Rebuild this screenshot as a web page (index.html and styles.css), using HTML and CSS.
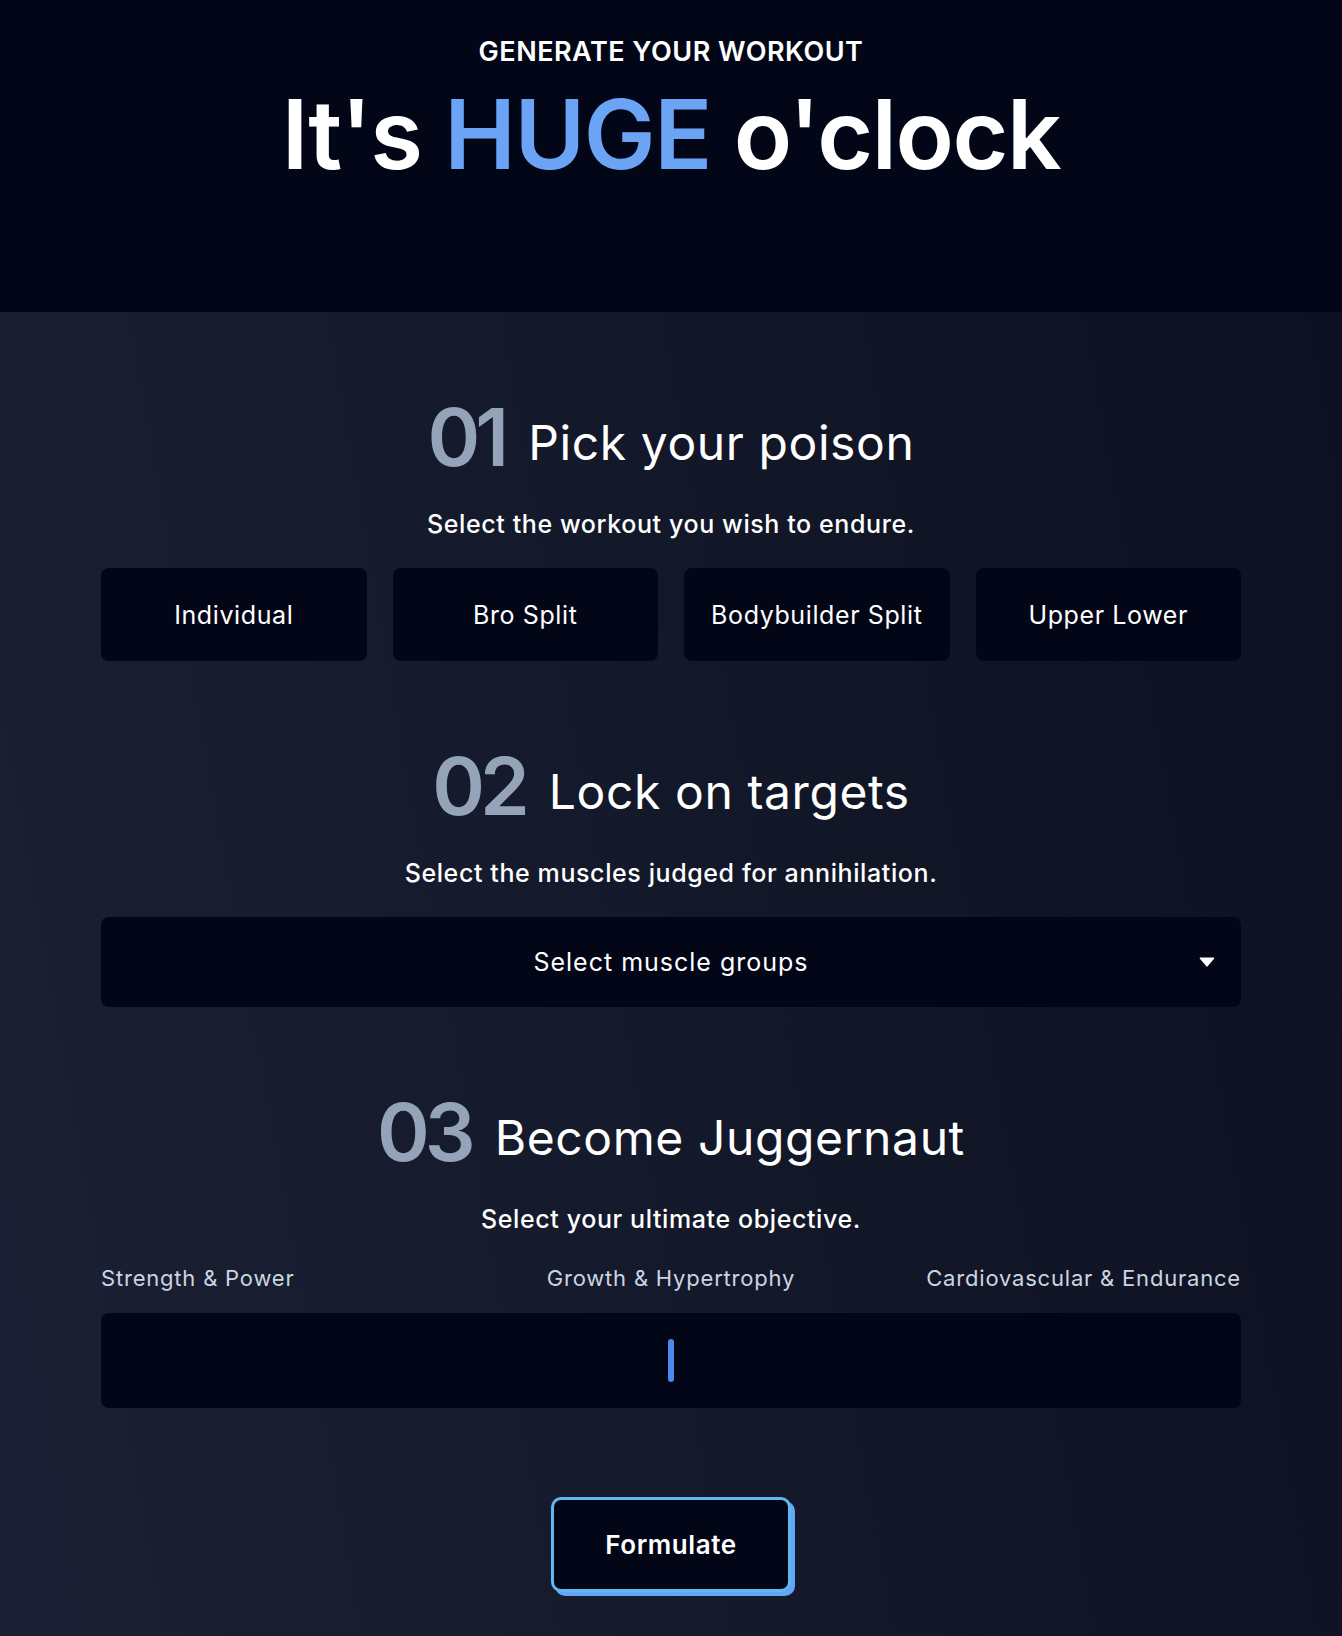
FILE: index.html
```html
<!DOCTYPE html>
<html lang="en">
<head>
<meta charset="utf-8">
<title>It's HUGE o'clock</title>
<link rel="stylesheet" href="styles.css">
</head>
<body>
<header class="hero">
  <p class="eyebrow">GENERATE YOUR WORKOUT</p>
  <h1 class="title">It's <span class="accent">HUGE</span> o'clock</h1>
</header>
<main class="main">
  <section class="step">
    <div class="step-head">
      <span class="step-num">01</span>
      <h2 class="step-title">Pick your poison</h2>
    </div>
    <p class="step-sub">Select the workout you wish to endure.</p>
    <div class="options">
      <button class="option">Individual</button>
      <button class="option">Bro Split</button>
      <button class="option">Bodybuilder Split</button>
      <button class="option">Upper Lower</button>
    </div>
  </section>
  <section class="step">
    <div class="step-head">
      <span class="step-num">02</span>
      <h2 class="step-title">Lock on targets</h2>
    </div>
    <p class="step-sub">Select the muscles judged for annihilation.</p>
    <button class="dropdown">
      <span class="dropdown-spacer"></span>
      <span class="dropdown-text">Select muscle groups</span>
      <svg class="caret" width="16" height="10" viewBox="0 0 16 10"><path d="M1.5 1.2 H14.5 L8 8.8 Z" fill="#fff" stroke="#fff" stroke-width="1.6" stroke-linejoin="round"/></svg>
    </button>
  </section>
  <section class="step">
    <div class="step-head">
      <span class="step-num">03</span>
      <h2 class="step-title">Become Juggernaut</h2>
    </div>
    <p class="step-sub">Select your ultimate objective.</p>
    <div class="labels">
      <span class="label label-left">Strength &amp; Power</span>
      <span class="label label-mid">Growth &amp; Hypertrophy</span>
      <span class="label label-right">Cardiovascular &amp; Endurance</span>
    </div>
    <input class="slider" type="range" min="0" max="100" value="50">
  </section>
  <div class="actions">
    <button class="cta">Formulate</button>
  </div>
</main>
</body>
</html>
```
FILE: styles.css
```css
* { box-sizing: border-box; }
html, body { margin: 0; padding: 0; }
body {
  font-family: "Inter", "Liberation Sans", sans-serif;
  color: #ffffff;
  background: #020617;
}
.hero {
  background: #020617;
  height: 312px;
  padding-top: 38px;
  text-align: center;
}
.eyebrow {
  margin: 0;
  font-size: 27px;
  line-height: 27px;
  font-weight: 600;
  letter-spacing: 0.5px;
}
.title {
  margin: 21px 0 0;
  font-size: 96px;
  line-height: 1;
  font-weight: 600;
  letter-spacing: -1.4px;
}
.accent { color: #6ba3f5; }
.main {
  background: linear-gradient(80deg, #1b2034 0%, #151a2c 40%, #0d1121 100%);
  padding: 85px 0 38px;
  min-height: 1324px;
}
.step {
  width: 1140px;
  margin: 0 auto 85px;
  display: flex;
  flex-direction: column;
  align-items: center;
}
.step:last-of-type { margin-bottom: 0; }
.step-head {
  display: flex;
  align-items: center;
  gap: 24px;
  height: 80px;
}
.step-num {
  font-size: 80px;
  line-height: 1;
  font-weight: 600;
  color: #94a3b8;
  letter-spacing: -5px;
}
.step-title {
  margin: 0;
  padding-top: 11px;
  font-size: 48px;
  line-height: 1;
  font-weight: 400;
  letter-spacing: 0.6px;
}
.step-sub {
  margin: 35px 0 0;
  font-size: 25px;
  line-height: 24px;
  font-weight: 500;
  letter-spacing: 0.6px;
}
.options {
  margin-top: 32px;
  width: 100%;
  display: grid;
  grid-template-columns: repeat(4, 1fr);
  gap: 26px;
}
.option {
  height: 93px;
  background: #020617;
  border: none;
  border-radius: 8px;
  color: #ffffff;
  font-family: inherit;
  font-size: 25px;
  font-weight: 400;
  letter-spacing: 0.6px;
}
.dropdown {
  margin-top: 32px;
  width: 100%;
  height: 90px;
  background: #020617;
  border: none;
  border-radius: 8px;
  color: #ffffff;
  font-family: inherit;
  font-size: 25px;
  letter-spacing: 1px;
  display: grid;
  grid-template-columns: 1fr auto 1fr;
  align-items: center;
  padding: 0 26px;
}
.caret { justify-self: end; }
.labels {
  margin-top: 37px;
  width: 100%;
  display: grid;
  grid-template-columns: repeat(3, 1fr);
}
.label {
  font-size: 22px;
  line-height: 21px;
  color: #cbd5e1;
  letter-spacing: 0.8px;
}
.label-left { text-align: left; }
.label-mid { text-align: center; }
.label-right { text-align: right; }
.slider {
  -webkit-appearance: none;
  appearance: none;
  margin: 24px 0 0;
  width: 100%;
  height: 95px;
  background: transparent;
}
.slider::-webkit-slider-runnable-track {
  height: 95px;
  background: #020617;
  border-radius: 8px;
}
.slider::-webkit-slider-thumb {
  -webkit-appearance: none;
  appearance: none;
  width: 6px;
  height: 43px;
  margin-top: 26px;
  border-radius: 3px;
  background: #4f86f2;
  box-shadow: 0 0 3px rgba(0, 0, 0, 0.8);
}
.actions {
  margin-top: 89px;
  display: flex;
  justify-content: center;
}
.cta {
  width: 240px;
  height: 95px;
  background: #020617;
  border: 3px solid #5db8ee;
  border-radius: 10px;
  box-shadow: 4px 4px 0 #62a4f5;
  color: #ffffff;
  font-family: inherit;
  font-size: 26px;
  font-weight: 600;
  letter-spacing: 0.6px;
}
```
